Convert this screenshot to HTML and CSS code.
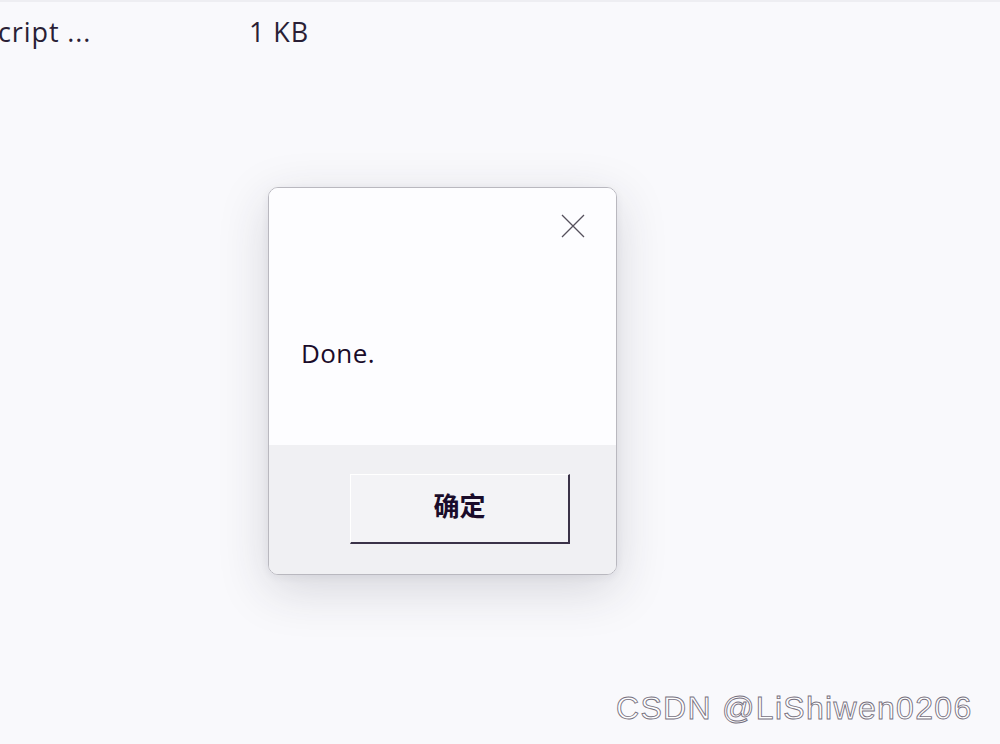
FILE: index.html
```
<!DOCTYPE html>
<html lang="en">
<head>
  <meta charset="UTF-8">
  <title>Done</title>
  <link rel="stylesheet" href="styles.css">
</head>
<body>

  <!-- File list row behind the dialog -->
  <div class="file-row">
    <span class="file-name">cript ...</span>
    <span class="file-size">1 KB</span>
  </div>

  <!-- Message box -->
  <div class="dialog">
    <div class="dialog-body">
      <div class="title-bar">
        <button class="close-btn" title="Close">
          <svg width="24" height="24" viewBox="0 0 24 24">
            <path d="M1 1 L23 23 M23 1 L1 23" stroke="#55505c" stroke-width="1.3" fill="none"/>
          </svg>
        </button>
      </div>
      <p class="message">Done.</p>
    </div>
    <div class="dialog-footer">
      <button class="ok-btn">确定</button>
    </div>
  </div>

  <div class="watermark">CSDN @LiShiwen0206</div>

</body>
</html>
```

FILE: styles.css
```
body {
  margin: 0;
  padding: 0;
  height: 744px;
  overflow: hidden;
  background-color: #f9f9fc;
  font-family: "Open Sans", "Noto Sans", sans-serif;
  color: #1c1028;
  border-top: 2px solid #eeeef2;
  box-sizing: border-box;
}
.file-row {
  display: flex;
  align-items: center;
  height: 58px;
  padding-bottom: 2px;
  font-size: 27px;
  letter-spacing: 0.9px;
  color: #2a1f36;
}
.file-name {
  width: 249px;
  flex-shrink: 0;
  margin-left: -2px;
}
.file-size {
  margin-left: 2px;
}
.dialog {
  width: 349px;
  height: 388px;
  margin: 125px 0 0 268px;
  border: 1px solid #b9b8bf;
  border-radius: 10px;
  box-sizing: border-box;
  overflow: hidden;
  display: flex;
  flex-direction: column;
  box-shadow: 0 14px 50px rgba(40, 40, 60, 0.17), 0 2px 8px rgba(40, 40, 60, 0.06);
}
.dialog-body {
  height: 257px;
  background-color: #fdfdff;
}
.title-bar {
  display: flex;
  justify-content: flex-end;
  padding: 26px 31px 0 0;
}
.close-btn {
  background: none;
  border: none;
  padding: 0;
  width: 24px;
  height: 24px;
  cursor: pointer;
}
.close-btn svg {
  display: block;
}
.message {
  margin: 97px 0 0 32px;
  font-size: 26px;
  letter-spacing: 0.4px;
  color: #1a0c2a;
}
.dialog-footer {
  flex: 1;
  background-color: #f0f0f3;
  padding: 29px 0 0 81px;
}
.ok-btn {
  width: 220px;
  height: 70px;
  background-color: #f3f3f6;
  border-top: 1px solid #ffffff;
  border-left: 1px solid #ffffff;
  border-right: 2px solid #3a3248;
  border-bottom: 2px solid #3a3248;
  border-radius: 0;
  font-family: "Noto Sans CJK SC", sans-serif;
  font-weight: bold;
  font-size: 26px;
  color: #1a0c2a;
  padding: 0 0 8px 0;
  cursor: pointer;
}
.watermark {
  position: absolute;
  left: 616px;
  top: 690px;
  font-family: "Liberation Sans", Arial, sans-serif;
  font-size: 32px;
  letter-spacing: 1.3px;
  color: #ffffff;
  -webkit-text-stroke: 0.9px #77717f;
}
```
